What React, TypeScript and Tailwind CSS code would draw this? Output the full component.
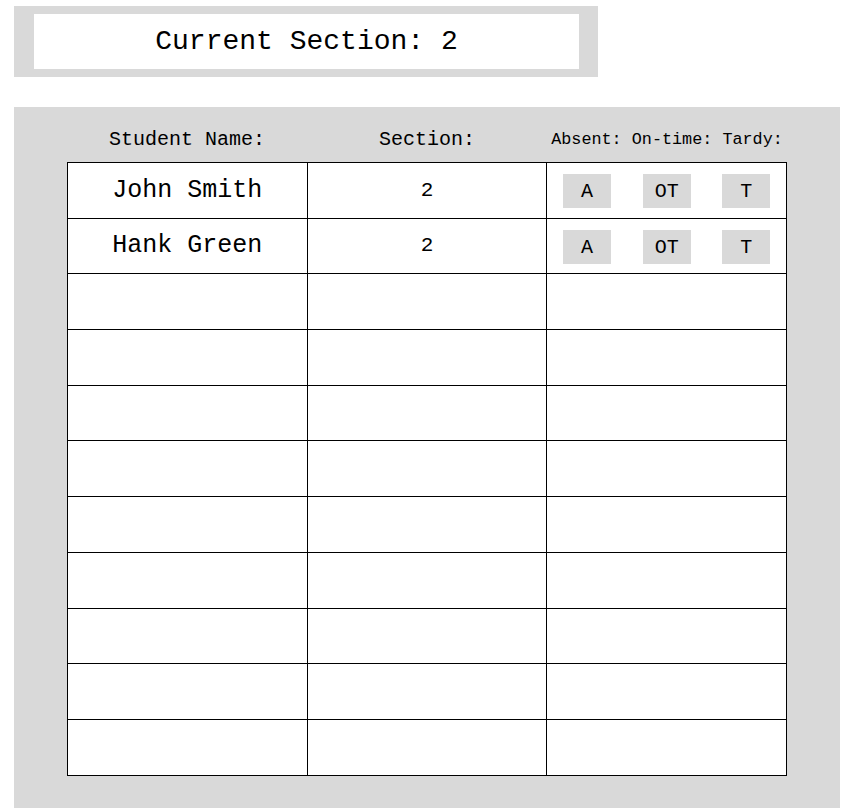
const rows = [
  { name: "John Smith", section: "2" },
  { name: "Hank Green", section: "2" },
  ...Array.from({ length: 9 }, () => ({ name: "", section: "" })),
];

function StatusButton({ label }: { label: string }) {
  return (
    <button className="w-[48px] h-[34px] bg-[#d9d9d9] text-[20px] leading-none text-black pt-[3px]">
      {label}
    </button>
  );
}

export default function App() {
  return (
    <div className="min-h-[808px] bg-white text-black" style={{ fontFamily: '"Liberation Mono", "Courier New", monospace' }}>
      <div className="pt-[6px] pl-[14px]">
        <div className="w-[584px] h-[71px] bg-[#d9d9d9] pl-[20px] pr-[19px] py-[8px]">
          <div className="h-full bg-white flex items-center justify-center text-[28px]">
            Current Section: 2
          </div>
        </div>
      </div>

      <div className="mt-[30px] ml-[14px] w-[826px] bg-[#d9d9d9] pl-[53px] pb-[33px]">
        <div className="w-[720px] h-[55px] pt-[23px] flex">
          <div className="flex-1 text-center text-[20px] leading-[20px]">Student Name:</div>
          <div className="flex-1 text-center text-[20px] leading-[20px]">Section:</div>
          <div className="flex-1 text-center text-[16.8px] leading-[20px]">Absent: On-time: Tardy:</div>
        </div>

        <table className="w-[720px] border-collapse bg-white table-fixed">
          <tbody>
            {rows.map((r, i) => (
              <tr key={i} className="h-[55.7px]">
                <td className="border border-black text-center text-[25px] p-0">{r.name}</td>
                <td className="border border-black text-center text-[21px] p-0">{r.section}</td>
                <td className="border border-black p-0">
                  {r.name && (
                    <div className="flex justify-around items-center pt-[1px]">
                      <StatusButton label="A" />
                      <StatusButton label="OT" />
                      <StatusButton label="T" />
                    </div>
                  )}
                </td>
              </tr>
            ))}
          </tbody>
        </table>
      </div>
    </div>
  );
}
